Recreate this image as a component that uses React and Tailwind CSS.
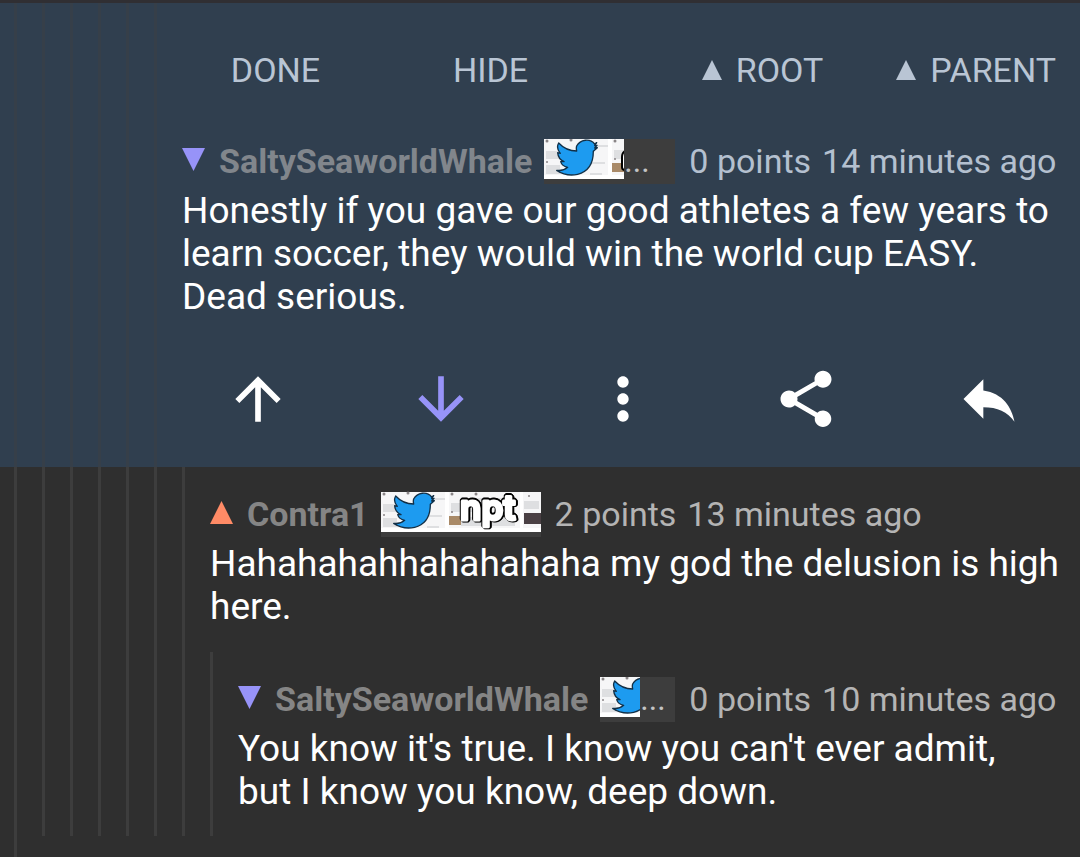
import { MdArrowUpward, MdArrowDownward, MdMoreVert, MdShare, MdReply } from 'react-icons/md';

function Triangle({ down, className }) {
  return (
    <svg viewBox="0 0 24 24" fill="currentColor" preserveAspectRatio="none" className={`shrink-0 ${className}`} aria-hidden="true">
      <path d={down ? 'M0 0h24L12 24z' : 'M0 24h24L12 0z'} />
    </svg>
  );
}

function FlairArt({ cut }) {
  return (
    <svg viewBox="0 0 160 40" className="w-[160px] h-10 max-w-none shrink-0 overflow-visible" role="img" aria-label="Twitter npt">
      <rect width="160" height="40" fill="#f6f6f7" />
      <g fill="#dedfe1">
        <rect x="2" y="12" width="18" height="8" />
        <rect x="2" y="26" width="14" height="9" />
        <rect x="48" y="6" width="16" height="2" />
        <rect x="46" y="23" width="15" height="2" />
        <rect x="46" y="34" width="12" height="3" />
        <rect x="70" y="11" width="22" height="9" />
        <rect x="94" y="6" width="30" height="3" />
        <rect x="80" y="25" width="54" height="9" />
        <rect x="143" y="9" width="15" height="8" />
      </g>
      <g fill="#fff">
        <rect x="64" width="4" height="40" />
        <rect x="139" width="3" height="40" />
        <rect y="36" width="160" height="4" />
      </g>
      <g fill="#8a8587">
        <circle cx="3" cy="2" r="1.5" />
        <circle cx="27" cy="1" r="1.5" />
        <circle cx="3" cy="23" r="1" />
        <circle cx="71" cy="2" r="1.5" />
        <circle cx="95" cy="2" r="1.5" />
        <circle cx="71" cy="20" r="1" />
        <circle cx="148" cy="4" r="1" />
      </g>
      <rect x="68" y="24" width="12" height="9" fill="#a98a68" />
      <rect x="143" y="21" width="17" height="11" fill="#4a4044" />
      <path
        d="M161 11 L155 15 C141 -3 112 1 101 21 C99 27 100 31 101 36 C79 36 61 27 47 12 C41 23 43 33 52 43 L44 41 C45 54 52 63 63 68 L53 68 C56 78 63 83 74 85 C64 94 54 96 41 94 C59 106 82 111 104 106 C136 98 151 72 151 37 L163 26 L155 27 L162 19 L155 20 Z"
        transform="translate(-1 0) scale(0.3333)"
        fill="#1d9bf0"
        stroke="#123047"
        strokeWidth="4"
        strokeLinejoin="round"
      />
      {cut ? (
        <path d="M81 12q-3 2-3 6v10q0 3 3 3" fill="#fff" stroke="#000" strokeWidth="2" />
      ) : (
        <text
          x="79"
          y="28"
          className="font-['Inter'] font-semibold text-[35px] [filter:drop-shadow(1px_1px_0_#000)_drop-shadow(-1px_-1px_0_#000)_drop-shadow(1px_-1px_0_#000)]"
          fill="#fff"
          stroke="#fff"
          strokeWidth="3"
          strokeLinejoin="round"
        >
          npt
        </text>
      )}
    </svg>
  );
}

function Flair({ artClass, boxClass, cut }) {
  return (
    <span className={`flex items-start h-[45px] bg-[#3d3d3d] shrink-0 ${boxClass}`}>
      <span className={`flex h-10 ${artClass}`}>
        <FlairArt cut={cut} />
      </span>
      {cut && <span className="text-[32px] leading-[45px] text-[#c4c4c4]">...</span>}
    </span>
  );
}

function Guides({ count, lineClass }) {
  return (
    <div className="flex gap-[25px] pl-[14px] shrink-0" aria-hidden="true">
      {Array.from({ length: count }, (_, i) => (
        <div key={i} className={`w-[3px] ${lineClass}`} />
      ))}
    </div>
  );
}

function CommentHeader({ vote, author, points, age, flair, authorClass, metaClass }) {
  return (
    <div className={`flex items-center h-[45px] text-[34px] leading-[45px] whitespace-nowrap ${metaClass}`}>
      <Triangle
        down={vote === 'down'}
        className={vote === 'down' ? 'w-[23px] h-[23px] mb-1 text-[#9793f8]' : 'w-[23px] h-[23px] mb-1 text-[#ff8b66]'}
      />
      <a href="#user" className={`font-bold ml-[14px] mr-[12px] ${authorClass}`}>{author}</a>
      {flair}
      <span className="ml-[14px]">{points}</span>
      <span className="ml-[11px]">{age}</span>
    </div>
  );
}

function Body({ children }) {
  return <p className="mt-[5px] text-[37px] leading-[43px] text-white">{children}</p>;
}

function ActionButton({ label, className = '', children }) {
  return (
    <button type="button" aria-label={label} className={`flex-1 h-full flex items-center justify-center ${className}`}>
      {children}
    </button>
  );
}

export default function App() {
  return (
    <main className="min-h-screen bg-[#2f2f2f] font-['Roboto',sans-serif] flex flex-col">
      {/* Selected comment */}
      <article className="flex bg-[#303f4f] border-t-[3px] border-[#302f33]">
        <Guides count={6} lineClass="bg-[#363f49]" />
        <div className="flex-1 min-w-0">
          <nav className="flex items-center h-[136px] pb-[2px] pl-[11px] pr-[24px] text-[34px] text-[#b9c5d4]">
            <button type="button" className="w-[215px]">DONE</button>
            <button type="button" className="w-[215px]">HIDE</button>
            <button type="button" className="ml-auto flex items-center gap-[14px]">
              <Triangle className="w-5 h-5" />
              ROOT
            </button>
            <button type="button" className="ml-[73px] flex items-center gap-[14px]">
              <Triangle className="w-5 h-5" />
              PARENT
            </button>
          </nav>
          <div className="pl-[25px] pr-[24px]">
            <CommentHeader
              vote="down"
              author="SaltySeaworldWhale"
              points="0 points"
              age="14 minutes ago"
              authorClass="text-[#81868c]"
              metaClass="text-[#b4c0cf]"
              flair={<Flair cut boxClass="w-[131px]" artClass="w-20 overflow-hidden" />}
            />
            <Body>
              Honestly if you gave our good athletes a few years to learn soccer, they would win the world cup EASY.
              Dead serious.
            </Body>
          </div>
          <div className="flex h-[136px] mt-[13px] pl-[10px] text-white">
            <ActionButton label="Upvote"><MdArrowUpward size={68} /></ActionButton>
            <ActionButton label="Downvote" className="text-[#9793f8]"><MdArrowDownward size={68} /></ActionButton>
            <ActionButton label="More"><MdMoreVert size={68} /></ActionButton>
            <ActionButton label="Share"><MdShare size={68} /></ActionButton>
            <ActionButton label="Reply"><MdReply size={68} /></ActionButton>
          </div>
        </div>
      </article>

      {/* Replies */}
      <article className="flex">
        <Guides count={7} lineClass="bg-[#3d3d3d]" />
        <div className="flex-1 min-w-0 pl-[25px] pr-[20px] pt-[25px] pb-[24px]">
          <CommentHeader
            vote="up"
            author="Contra1"
            points="2 points"
            age="13 minutes ago"
            authorClass="text-[#858585]"
            metaClass="text-[#b4b4b4]"
            flair={<Flair boxClass="w-[160px]" artClass="w-[160px]" />}
          />
          <Body>Hahahahahhahahahaha my god the delusion is high here.</Body>
        </div>
      </article>
      <article className="flex">
        <Guides count={8} lineClass="bg-[#3d3d3d]" />
        <div className="flex-1 min-w-0 pl-[25px] pr-[24px] pt-[25px] pb-[23px]">
          <CommentHeader
            vote="down"
            author="SaltySeaworldWhale"
            points="0 points"
            age="10 minutes ago"
            authorClass="text-[#858585]"
            metaClass="text-[#b4b4b4]"
            flair={<Flair cut boxClass="w-[75px]" artClass="w-10 overflow-hidden" />}
          />
          <Body>You know it's true. I know you can't ever admit, but I know you know, deep down.</Body>
        </div>
      </article>
      <div className="flex flex-1">
        <Guides count={1} lineClass="bg-[#3d3d3d]" />
      </div>
    </main>
  );
}
